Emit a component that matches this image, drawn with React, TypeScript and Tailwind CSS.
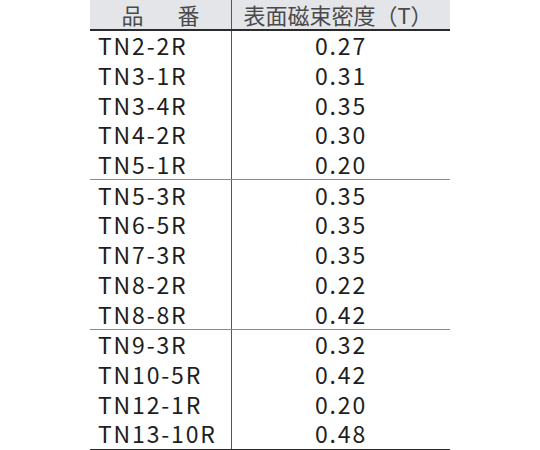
import React from "react";

const groups: [string, string][][] = [
  [
    ["TN2-2R", "0.27"],
    ["TN3-1R", "0.31"],
    ["TN3-4R", "0.35"],
    ["TN4-2R", "0.30"],
    ["TN5-1R", "0.20"],
  ],
  [
    ["TN5-3R", "0.35"],
    ["TN6-5R", "0.35"],
    ["TN7-3R", "0.35"],
    ["TN8-2R", "0.22"],
    ["TN8-8R", "0.42"],
  ],
  [
    ["TN9-3R", "0.32"],
    ["TN10-5R", "0.42"],
    ["TN12-1R", "0.20"],
    ["TN13-10R", "0.48"],
  ],
];

export default function App() {
  return (
    <div
      className="w-[540px] h-[450px] bg-white overflow-hidden"
      style={{ fontFamily: '"Noto Sans CJK JP", "Open Sans", sans-serif' }}
    >
      <div className="ml-[90px] w-[360px] flex flex-col text-[#1e1e1e]">
        <div className="grid grid-cols-[142px_218px] h-[31px] bg-[#e3e5e9] border-b-2 border-[#2a2a2a] text-[#4a4a4a] text-[22px] leading-[29px]">
          <div className="flex items-center justify-center border-r border-[#555]">
            品<span className="inline-block w-[34px]"></span>番
          </div>
          <div className="flex items-center justify-center pr-[6px]">表面磁束密度（T）</div>
        </div>
        {groups.map((g, gi) => (
          <div
            key={gi}
            className={gi < groups.length - 1 ? "border-b border-[#8a8a8a]" : "border-b-2 border-[#2a2a2a]"}
          >
            {g.map(([name, val]) => (
              <div key={name} className="grid grid-cols-[142px_218px] h-[29.7px] text-[23px] leading-[29px] tracking-[0.08em]">
                <div className="flex items-center pl-[8px] border-r border-[#555]">{name}</div>
                <div className="flex items-center justify-center">{val}</div>
              </div>
            ))}
          </div>
        ))}
      </div>
    </div>
  );
}
